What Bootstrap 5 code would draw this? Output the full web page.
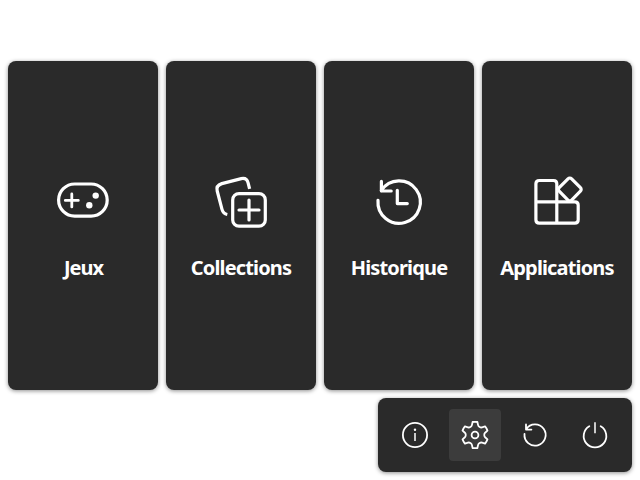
<!DOCTYPE html>
<html lang="fr">
<head>
<meta charset="utf-8">
<meta name="viewport" content="width=device-width, initial-scale=1">
<title>Accueil</title>
<link href="https://cdn.jsdelivr.net/npm/bootstrap@5.3.0/dist/css/bootstrap.min.css" rel="stylesheet">
<style>
body { font-family: "Noto Sans", "Open Sans", sans-serif; height: 480px; overflow: hidden; background: #fff; }
.screen { height: 480px; padding-top: 61px; }
.tiles { height: 329px; }
.panel { background: #2a2a2a; border-radius: 8px; box-shadow: 0 1px 4px rgba(0,0,0,.45); }
.tile { flex: 1 1 0; font-size: 20px; font-weight: 700; line-height: 28px; padding-top: 110px; }
.tile svg { width: 60px; height: 60px; stroke-width: 3.2; margin-bottom: 23px; }
.tile span { white-space: nowrap; letter-spacing: -.85px; }
.tile .jeux { letter-spacing: -1px; padding-left: 1px; }
svg { fill: none; stroke: #fff; stroke-linecap: round; stroke-linejoin: round; display: block; }
.tools { padding: 11px; }
.tool { width: 52px; height: 52px; border: 0; border-radius: 4px; padding: 0; }
.tool.active { background: #3c3c3c; }
.tool svg { width: 52px; height: 52px; stroke-width: 1.8; }
</style>
</head>
<body>
<main class="screen px-2 d-flex flex-column gap-2">
  <div class="tiles d-flex gap-2">
    <a href="#" class="panel tile d-flex flex-column align-items-center text-white text-decoration-none">
      <svg viewBox="53 171 60 60"><rect x="58.6" y="184" width="48.6" height="32.2" rx="16.1"/><path d="M65.3 200.4h13M71.8 193.9v13" stroke-width="2.8"/><g fill="#fff" stroke="none"><circle cx="95.7" cy="195.6" r="3.2"/><circle cx="89.3" cy="205.3" r="3.2"/></g></svg>
      <span class="jeux">Jeux</span>
    </a>
    <a href="#" class="panel tile d-flex flex-column align-items-center text-white text-decoration-none">
      <svg viewBox="211 171 60 60"><rect x="232.7" y="193.6" width="32.6" height="32.6" rx="6.3"/><path d="M239 210h20M249 200v20"/><path d="M249.6 188.9L248.1 182.8Q246.8 177.5 241.3 178.6L221.8 183.6Q215.8 185.5 217.2 191L222 209.3Q223.2 213.7 227.3 214.5" stroke-linecap="butt"/></svg>
      <span>Collections</span>
    </a>
    <a href="#" class="panel tile d-flex flex-column align-items-center text-white text-decoration-none">
      <svg viewBox="369 171 60 60"><path d="M378 200.4A21.2 21.2 0 1 0 381.4 190.5"/><path d="M381.4 181.4V191H391.2M397.3 190.3V203.6H407.3"/></svg>
      <span>Historique</span>
    </a>
    <a href="#" class="panel tile d-flex flex-column align-items-center text-white text-decoration-none">
      <svg viewBox="527 171 60 60"><path d="M556.8 202V183.8Q556.8 180.5 553.5 180.5H539.3Q535.9 180.5 535.9 183.8V219.8Q535.9 223.2 539.3 223.2H574.8Q578.2 223.2 578.2 219.8V205.2Q578.2 201.9 574.8 201.9H535.9M556.8 202V223.2"/><rect x="561" y="180.6" width="17.6" height="17.6" rx="2.6" transform="rotate(45 569.8 189.4)"/></svg>
      <span>Applications</span>
    </a>
  </div>
  <div class="panel tools d-flex gap-2 align-self-end">
    <button class="btn tool" aria-label="Informations"><svg viewBox="389 409 52 52"><circle cx="415" cy="435" r="12.1"/><path d="M415 433v8" stroke-linecap="butt" stroke="#ddd"/><circle cx="415" cy="429.8" r="1.2" fill="#fff" stroke="none"/></svg></button>
    <button class="btn tool active" aria-label="Paramètres"><svg viewBox="-26 -26 52 52"><path d="M-2.4-13Q0-13.4 2.4-13L3.1-9.9C3.5-8.3 5.44-7.18 7.02-7.63L10.06-8.58Q11.6-6.7 12.46-4.42L10.12-2.27C8.94-1.12 8.94 1.12 10.12 2.27L12.46 4.42Q11.6 6.7 10.06 8.58L7.02 7.63C5.44 7.18 3.5 8.3 3.1 9.9L2.4 13Q0 13.4-2.4 13L-3.1 9.9C-3.5 8.3-5.44 7.18-7.02 7.63L-10.06 8.58Q-11.6 6.7-12.46 4.42L-10.12 2.27C-8.94 1.12-8.94-1.12-10.12-2.27L-12.46-4.42Q-11.6-6.7-10.06-8.58L-7.02-7.63C-5.44-7.18-3.5-8.3-3.1-9.9Z"/><circle r="3.4"/></svg></button>
    <button class="btn tool" aria-label="Redémarrer"><svg viewBox="509 409 52 52"><path d="M524.5 434A10.6 10.6 0 1 0 526.2 429.2M526 424.5V429.6H531.4"/></svg></button>
    <button class="btn tool" aria-label="Arrêter"><svg viewBox="569 409 52 52"><path d="M589.3 426.3A11.3 11.3 0 1 0 600.7 426.3"/><path d="M595 422.3V433.2" stroke="#ddd" stroke-linecap="butt"/></svg></button>
  </div>
</main>
<script src="https://cdn.jsdelivr.net/npm/bootstrap@5.3.0/dist/js/bootstrap.bundle.min.js"></script>
</body>
</html>
